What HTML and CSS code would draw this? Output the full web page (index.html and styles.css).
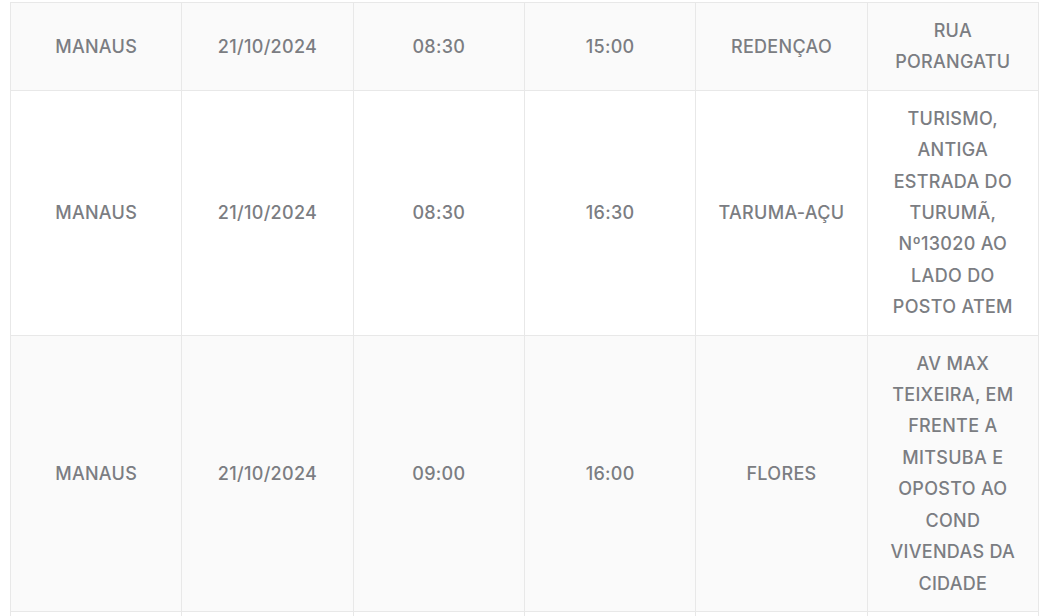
FILE: index.html
```html
<!DOCTYPE html>
<html lang="pt-BR">
<head>
<meta charset="utf-8">
<title>Tabela</title>
<link rel="stylesheet" href="styles.css">
</head>
<body>
<table class="schedule">
  <tbody>
    <tr class="row-alt">
      <td>MANAUS</td>
      <td>21/10/2024</td>
      <td>08:30</td>
      <td>15:00</td>
      <td>REDENÇAO</td>
      <td>RUA PORANGATU</td>
    </tr>
    <tr>
      <td>MANAUS</td>
      <td>21/10/2024</td>
      <td>08:30</td>
      <td>16:30</td>
      <td>TARUMA-AÇU</td>
      <td>TURISMO, ANTIGA ESTRADA DO TURUMÃ, Nº13020 AO LADO DO POSTO ATEM</td>
    </tr>
    <tr class="row-alt">
      <td>MANAUS</td>
      <td>21/10/2024</td>
      <td>09:00</td>
      <td>16:00</td>
      <td>FLORES</td>
      <td>AV MAX TEIXEIRA, EM FRENTE A MITSUBA E OPOSTO AO COND VIVENDAS DA CIDADE</td>
    </tr>
    <tr class="row-empty">
      <td></td><td></td><td></td><td></td><td></td><td></td>
    </tr>
  </tbody>
</table>
</body>
</html>
```

FILE: styles.css
```css
html, body {
  margin: 0;
  padding: 0;
  background: #ffffff;
}

body {
  padding: 2px 7px 0 10px;
  font-family: "Inter", "Open Sans", sans-serif;
}

.schedule {
  width: 1029px;
  border-collapse: collapse;
  table-layout: fixed;
}

.schedule td {
  border: 1px solid #e8e8e8;
  padding: 12px 16px;
  text-align: center;
  vertical-align: middle;
  color: #7b7d82;
  font-size: 18px;
  font-weight: 500;
  line-height: 31.4px;
  letter-spacing: 0.3px;
}

.row-alt td {
  background: #fafafa;
}

.row-empty td {
  height: 40px;
}
```
